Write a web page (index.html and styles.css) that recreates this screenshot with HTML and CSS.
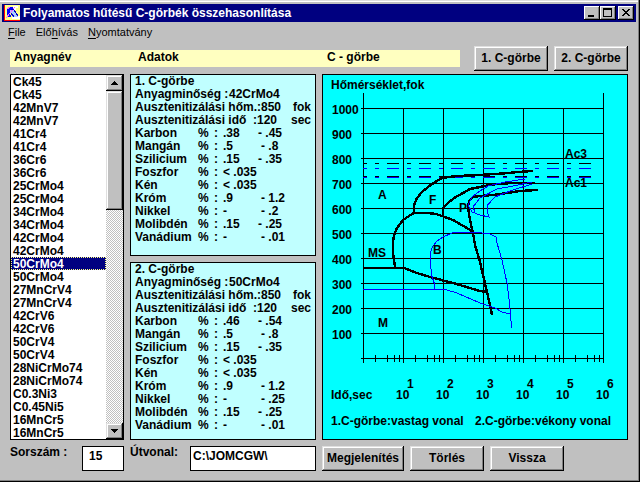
FILE: index.html
```html
<!DOCTYPE html>
<html lang="hu">
<head>
<meta charset="utf-8">
<title>Folyamatos hűtésű C-görbék összehasonlítása</title>
<link rel="stylesheet" href="styles.css">
</head>
<body>
<div class="window">
  <header class="titlebar">
    <svg class="app-icon" viewBox="0 0 16 16" shape-rendering="crispEdges" aria-hidden="true">
      <rect width="16" height="16" fill="#f00"/>
      <rect x="1" y="0" width="15" height="15" fill="#ff8"/>
      <path d="M3 3h2v-1h4v2H7v1H6v5h1v2H4v-2H3z" fill="#00f"/>
      <path d="M6 5h5l3 7H8z" fill="#acf"/>
      <path d="M9 1h5v2h-2v2h-2z" fill="#fff"/>
      <path d="M2 13L11 2M3 4l3-2" fill="none" stroke="#e6f" stroke-width="1"/>
      <path d="M8 13h7v-2" fill="none" stroke="#fff" stroke-width="2"/>
      <path d="M7 4l3 1 4 6M7 8l3 4" fill="none" stroke="#00c" stroke-width="1"/>
    </svg>
    <h1>Folyamatos hűtésű C-görbék összehasonlítása</h1>
    <div class="controls">
      <button type="button" aria-label="Kis méret"><svg viewBox="0 0 12 10" shape-rendering="crispEdges"><path d="M2 7h6v2H2z"/></svg></button>
      <button type="button" aria-label="Teljes méret"><svg viewBox="0 0 12 10" shape-rendering="crispEdges"><path d="M1 0h9v9H1zM2 2v6h7V2z" fill-rule="evenodd"/></svg></button>
      <button type="button" class="close" aria-label="Bezárás"><svg viewBox="0 0 12 10" shape-rendering="crispEdges"><path d="M2 1h2v1h1v1h2V2h1V1h2v1H9v1H8v1H7v1h1v1h1v1h1v1H8V7H7V6H5v1H4v1H2V7h1V6h1V5h1V4H4V3H3V2H2z"/></svg></button>
    </div>
  </header>
  <nav class="menu">
    <button type="button"><u>F</u>ile</button>
    <button type="button">Elő<u>h</u>ívás</button>
    <button type="button"><u>N</u>yomtatvány</button>
  </nav>
  <main>
    <div class="head">
      <div class="captions">
        <label for="materials">Anyagnév</label>
        <span>Adatok</span>
        <span>C - görbe</span>
      </div>
      <button type="button" class="push">1. C-görbe</button>
      <button type="button" class="push">2. C-görbe</button>
    </div>
    <div class="columns">
      <div class="listbox">
        <select id="materials" size="28">
          <option>Ck45</option><option>Ck45</option>
          <option>42MnV7</option><option>42MnV7</option>
          <option>41Cr4</option><option>41Cr4</option>
          <option>36Cr6</option><option>36Cr6</option>
          <option>25CrMo4</option><option>25CrMo4</option>
          <option>34CrMo4</option><option>34CrMo4</option>
          <option>42CrMo4</option><option>42CrMo4</option>
          <option selected>50CrMo4</option><option>50CrMo4</option>
          <option>27MnCrV4</option><option>27MnCrV4</option>
          <option>42CrV6</option><option>42CrV6</option>
          <option>50CrV4</option><option>50CrV4</option>
          <option>28NiCrMo74</option><option>28NiCrMo74</option>
          <option>C0.3Ni3</option><option>C0.45Ni5</option>
          <option>16MnCr5</option><option>16MnCr5</option>
        </select>
        <div class="scrollbar">
          <button type="button" aria-label="Fel"><svg viewBox="0 0 7 4" shape-rendering="crispEdges"><path d="M3 0h1v1h1v1h1v1h1v1H0V3h1V2h1V1h1z"/></svg></button>
          <div class="thumb"></div>
          <button type="button" class="down" aria-label="Le"><svg viewBox="0 0 7 4" shape-rendering="crispEdges"><path d="M0 0h7v1H6v1H5v1H4v1H3V3H2V2H1V1H0z"/></svg></button>
        </div>
      </div>
      <div class="data">
        <section class="panel first">
          <h2>1. C-görbe</h2>
          <p><span class="name">Anyagminőség :</span><span>42CrMo4</span></p>
          <p><span>Ausztenitizálási hőm.:850</span><span class="unit">fok</span></p>
          <p><span>Ausztenitizálási idő &nbsp;:120</span><span class="unit">sec</span></p>
          <table>
            <tr><th>Karbon</th><td>%</td><td>:</td><td>.38</td><td>- .45</td></tr>
            <tr><th>Mangán</th><td>%</td><td>:</td><td>.5</td><td class="in">- .8</td></tr>
            <tr><th>Szilicium</th><td>%</td><td>:</td><td>.15</td><td>- .35</td></tr>
            <tr><th>Foszfor</th><td>%</td><td>:</td><td colspan="2">&lt; .035</td></tr>
            <tr><th>Kén</th><td>%</td><td>:</td><td colspan="2">&lt; .035</td></tr>
            <tr><th>Króm</th><td>%</td><td>:</td><td>.9</td><td class="in">- 1.2</td></tr>
            <tr><th>Nikkel</th><td>%</td><td>:</td><td>-</td><td class="in">- .2</td></tr>
            <tr><th>Molibdén</th><td>%</td><td>:</td><td>.15</td><td>- .25</td></tr>
            <tr><th>Vanádium</th><td>%</td><td>:</td><td>-</td><td class="in">- .01</td></tr>
          </table>
        </section>
        <section class="panel">
          <h2>2. C-görbe</h2>
          <p><span class="name">Anyagminőség :</span><span>50CrMo4</span></p>
          <p><span>Ausztenitizálási hőm.:850</span><span class="unit">fok</span></p>
          <p><span>Ausztenitizálási idő &nbsp;:120</span><span class="unit">sec</span></p>
          <table>
            <tr><th>Karbon</th><td>%</td><td>:</td><td>.46</td><td>- .54</td></tr>
            <tr><th>Mangán</th><td>%</td><td>:</td><td>.5</td><td class="in">- .8</td></tr>
            <tr><th>Szilicium</th><td>%</td><td>:</td><td>.15</td><td>- .35</td></tr>
            <tr><th>Foszfor</th><td>%</td><td>:</td><td colspan="2">&lt; .035</td></tr>
            <tr><th>Kén</th><td>%</td><td>:</td><td colspan="2">&lt; .035</td></tr>
            <tr><th>Króm</th><td>%</td><td>:</td><td>.9</td><td class="in">- 1.2</td></tr>
            <tr><th>Nikkel</th><td>%</td><td>:</td><td>-</td><td class="in">- .25</td></tr>
            <tr><th>Molibdén</th><td>%</td><td>:</td><td>.15</td><td>- .25</td></tr>
            <tr><th>Vanádium</th><td>%</td><td>:</td><td>-</td><td class="in">- .01</td></tr>
          </table>
        </section>
      </div>
      <div class="chart">
        <svg viewBox="323 75 304 364" role="img" aria-label="C - görbe">
          <g class="grid">
            <path d="M363.5 93V363M403.5 108V363M443.5 108V363M483.5 108V363M523.5 108V363M563.5 108V363M603.5 93V363"/>
            <path d="M361 108.5H604M361 133.5H604M361 158.5H604M361 183.5H604M361 208.5H604M361 233.5H604M361 258.5H604M361 283.5H604M361 308.5H604M361 333.5H604M361 358.5H604"/>
            <path d="M375.5 355v7M387.5 355v7M394.5 355v7M399.5 355v7M415.5 355v7M427.5 355v7M434.5 355v7M439.5 355v7M455.5 355v7M467.5 355v7M474.5 355v7M479.5 355v7M495.5 355v7M507.5 355v7M514.5 355v7M519.5 355v7M535.5 355v7M547.5 355v7M554.5 355v7M559.5 355v7M575.5 355v7M587.5 355v7M594.5 355v7M599.5 355v7"/>
          </g>
          <g class="dash">
            <path d="M363 163.5H591"/>
            <path class="second" d="M363 168.5H591M363 177.5H591"/>
            <path d="M363 176.5H591"/>
          </g>
          <g class="thick">
            <path d="M414 213V205L417 198L422 192L428 187L435 182L442 178L449 177L457 176L480 175L509 173L517 172L533 171"/>
            <path d="M443 216V208L448 203L454 198L463 193L470 189L480 187L489 185L498 184L513 183H535"/>
            <path d="M395 267L393 253V242L394 235L397 228L403 220L409 216L414 213H428L436 214L442 216L453 220L472 231"/>
            <path d="M538 190L520 191L507 193L493 195L480 196L473 197L469 201L468 207L470 220L473 233L475 245L480 262L483 275L487 292L490 305L492 315"/>
            <path d="M363 268H404L417 273L430 277L453 283L480 291L487 292"/>
          </g>
          <g class="thin">
            <path d="M363 289.5H445L457 293L480 303L495 308L502 312L510 314"/>
            <path d="M434.5 289V284L431.500 275L430.5 262V252L433 246L437 241L443 237L452 233L460 232.5H478L490 234L496 237L497 243L502 260L507 283L509.500 303L510.500 314L511.500 328"/>
            <path d="M525 179L505 182L488 186L480 191L472 197L468 205L472 212L480 215L489 217L487.500 213V205L495 197L510 191L532 184"/>
            <path d="M532 182L513 186L497 189L480 198L473 207L475 212"/>
          </g>
          <g class="labels">
            <text x="331" y="89">Hőmérséklet,fok</text>
            <text x="332" y="114">1000</text><text x="332" y="139">900</text><text x="332" y="164">800</text>
            <text x="332" y="189">700</text><text x="332" y="214">600</text><text x="332" y="239">500</text>
            <text x="332" y="264">400</text><text x="332" y="289">300</text><text x="332" y="314">200</text>
            <text x="332" y="339">100</text>
            <text x="378" y="199">A</text><text x="429" y="204">F</text><text x="459" y="212">P</text>
            <text x="433" y="254">B</text><text x="368" y="257">MS</text><text x="378" y="327">M</text>
            <text x="565" y="158">Ac3</text><text x="565" y="187">Ac1</text>
            <text x="331" y="399">Idő,sec</text>
            <text x="396" y="399">10</text><text x="436" y="399">10</text><text x="476" y="399">10</text>
            <text x="516" y="399">10</text><text x="556" y="399">10</text><text x="596" y="399">10</text>
            <text x="407" y="388">1</text><text x="447" y="388">2</text><text x="487" y="388">3</text>
            <text x="527" y="388">4</text><text x="567" y="388">5</text><text x="607" y="388">6</text>
            <text x="331" y="425">1.C-görbe:vastag vonal</text><text x="475" y="425">2.C-görbe:vékony vonal</text>
          </g>
        </svg>
      </div>
    </div>
    <div class="foot">
      <div class="field"><label for="number">Sorszám :</label><input id="number" class="number" value="15"></div>
      <div class="field"><label for="path">Útvonal:</label><input id="path" class="path" value="C:\JOMCGW\"></div>
      <div class="actions">
        <button type="button" class="push wide">Megjelenítés</button>
        <button type="button" class="push">Törlés</button>
        <button type="button" class="push">Vissza</button>
      </div>
    </div>
  </main>
</div>
</body>
</html>
```
FILE: styles.css
```css
* {
  box-sizing: border-box;
}

body {
  margin: 0;
  background: #c0c0c0;
  color: #000;
  font: bold 12px/13px "Liberation Sans", Arial, sans-serif;
}

button,
input,
select {
  margin: 0;
  font: inherit;
  color: inherit;
  border-radius: 0;
}

h1,
h2,
p {
  margin: 0;
  font: inherit;
}

.window {
  min-height: 100vh;
  padding: 4px 4px 10px 2px;
  box-shadow: inset -1px -1px #000, inset -2px -2px #808080, inset 0 1px #dfdfdf, inset 0 2px #fff;
}

.titlebar {
  display: flex;
  align-items: center;
  height: 18px;
  padding: 0 2px;
  background: #000080;
  color: #fff;
}

.app-icon {
  width: 16px;
  height: 16px;
  margin-right: 3px;
}

.controls {
  display: flex;
  margin-left: auto;
}

.controls button {
  width: 16px;
  height: 14px;
  padding: 2px;
  border: 0;
  background: #c0c0c0;
  box-shadow: inset -1px -1px #000, inset 1px 1px #fff, inset -2px -2px #808080;
}

.controls svg {
  display: block;
  width: 12px;
  height: 10px;
}

.controls .close {
  margin-left: 2px;
}

.menu {
  display: flex;
  gap: 10px;
  height: 24px;
  padding: 3px 6px 7px;
}

.menu button {
  padding: 0;
  border: 0;
  background: none;
  font: 11px/14px "Liberation Sans", Arial, sans-serif;
}

.menu u {
  text-underline-offset: 2px;
}

main {
  padding: 0 8px;
}

.head {
  display: flex;
  align-items: center;
  gap: 6px;
  margin-bottom: 3px;
}

.captions {
  display: grid;
  grid-template-columns: 124px 189px 1fr;
  flex: 1;
  height: 17px;
  margin-right: 8px;
  padding: 0 4px;
  background: #ffffc0;
  line-height: 15px;
}

.push {
  width: 74px;
  height: 25px;
  padding: 0;
  border: 0;
  background: #c0c0c0;
  white-space: nowrap;
  box-shadow: inset -1px -1px #000, inset 1px 1px #dfdfdf, inset -2px -2px #808080, inset 2px 2px #fff;
}

.wide {
  width: 82px;
}

.columns {
  display: grid;
  grid-template-columns: 114px 186px 1fr;
  gap: 6px;
}

.listbox,
.panel,
.chart {
  border: 1px solid #000;
}

.listbox {
  display: flex;
  background: #fff;
}

.listbox select {
  flex: 1;
  min-width: 0;
  height: 364px;
  padding: 0;
  border: 0;
  outline: 0;
  background: #fff;
  overflow: hidden;
  scrollbar-width: none;
}

.listbox option {
  height: 13px;
  min-height: 13px;
  padding: 0 2px;
  font-weight: bold;
  line-height: 13px;
}

.listbox option:checked {
  background: #000080 linear-gradient(#000080, #000080);
  color: #fff;
  -webkit-text-fill-color: #fff;
  outline: 1px dotted #ffff80;
  outline-offset: -1px;
}

.scrollbar {
  display: flex;
  flex-direction: column;
  width: 17px;
  background: repeating-conic-gradient(#c0c0c0 0 25%, #fff 0 50%) 0 0 / 2px 2px;
}

.scrollbar button,
.thumb {
  display: grid;
  place-items: center;
  height: 16px;
  padding: 0;
  border: 0;
  background: #c0c0c0;
  box-shadow: inset -1px -1px #000, inset 1px 1px #dfdfdf, inset -2px -2px #808080, inset 2px 2px #fff;
}

.scrollbar .thumb {
  height: 119px;
}

.scrollbar svg {
  width: 7px;
  height: 4px;
}

.scrollbar .down {
  margin-top: auto;
}

.data {
  display: flex;
  flex-direction: column;
  gap: 6px;
}

.panel {
  padding: 0 4px 7px;
  background: #c0ffff;
}

.panel.first {
  flex: 1;
}

.panel p {
  display: flex;
  white-space: nowrap;
}

.panel .name {
  width: 94px;
}

.panel .unit {
  margin-left: auto;
}

table {
  width: 100%;
  table-layout: fixed;
  border-collapse: collapse;
}

th,
td {
  padding: 0;
  text-align: left;
  font-weight: bold;
  white-space: nowrap;
}

th {
  width: 63px;
}

td:nth-child(2) {
  width: 16px;
}

td:nth-child(3) {
  width: 9px;
}

td:nth-child(4) {
  width: 35px;
}

.in {
  padding-left: 3px;
}

.chart {
  background: #0ff;
}

.chart svg {
  display: block;
  width: 100%;
  height: auto;
}

.grid path,
.dash path,
.thick path,
.thin path {
  fill: none;
  stroke: #000;
  stroke-width: 1;
  shape-rendering: crispEdges;
}

.dash path {
  stroke-dasharray: 12 8 4 8;
  stroke-dashoffset: 8;
}

.dash .second,
.thin path {
  stroke: #00f;
}

.thick path {
  stroke-width: 2.4;
  stroke-linejoin: round;
}

.foot {
  display: grid;
  grid-template-columns: 114px 186px 1fr;
  gap: 6px;
  margin-top: 6px;
}

.field {
  display: flex;
  justify-content: space-between;
}

.field input {
  height: 25px;
  padding: 2px 2px 8px;
  border: 1px solid #000;
  background: #fff;
}

.field .number {
  width: 42px;
  padding-left: 6px;
}

.field .path {
  width: 126px;
}

.actions {
  display: flex;
  gap: 6px;
}
```
